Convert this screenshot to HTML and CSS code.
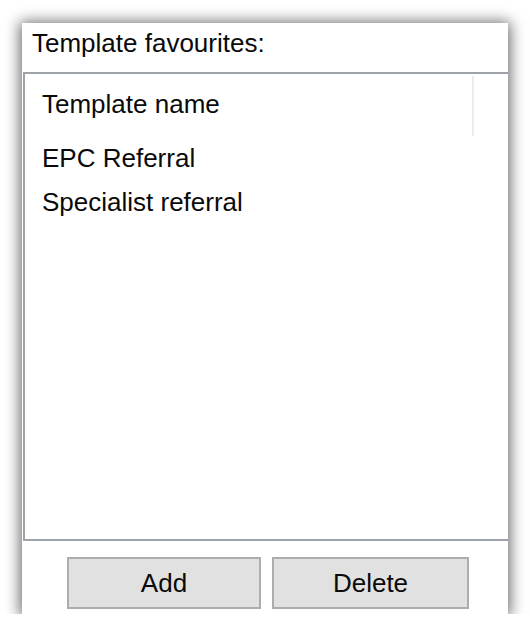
FILE: index.html
```html
<!DOCTYPE html>
<html lang="en">
<head>
<meta charset="utf-8">
<title>Template favourites</title>
<link rel="stylesheet" href="styles.css">
</head>
<body>
<div class="window">
  <div class="title">Template favourites:</div>
  <div class="list">
    <div class="list-head">
      <div class="col-name">Template name</div>
      <div class="col-rest"></div>
    </div>
    <div class="row">EPC Referral</div>
    <div class="row">Specialist referral</div>
  </div>
  <div class="actions">
    <button class="btn btn-add" type="button">Add</button>
    <button class="btn btn-delete" type="button">Delete</button>
  </div>
</div>
</body>
</html>
```
FILE: styles.css
```css
* {
  box-sizing: border-box;
}

html, body {
  margin: 0;
  padding: 0;
  background: #ffffff;
}

body {
  font-family: "Liberation Sans", Arial, sans-serif;
  font-size: 26px;
  color: #0a0a0a;
}

.window {
  margin: 23px 0 0 22px;
  width: 486px;
  height: 591px;
  background: #ffffff;
  box-shadow: 0 1px 14px 2px rgba(0, 0, 0, 0.6);
  display: flex;
  flex-direction: column;
}

.title {
  height: 49px;
  padding: 5px 0 0 10px;
  line-height: 30px;
  white-space: nowrap;
}

.list {
  margin-left: 1px;
  height: 469px;
  border-top: 2px solid #9ea3aa;
  border-left: 2px solid #9ea3aa;
  border-bottom: 2px solid #9ea3aa;
  background: #ffffff;
}

.list-head {
  display: flex;
  height: 62px;
}

.col-name {
  width: 449px;
  height: 60px;
  margin-top: 2px;
  padding: 13px 0 0 17px;
  line-height: 30px;
  border-right: 2px solid #ebebeb;
  white-space: nowrap;
}

.col-rest {
  flex: 1;
}

.row {
  height: 44px;
  line-height: 44px;
  padding-left: 17px;
  white-space: nowrap;
}

.actions {
  flex: 1;
  display: flex;
  gap: 11px;
  padding: 16px 0 0 45px;
}

.btn {
  height: 52px;
  margin: 0;
  padding: 0;
  background: #e1e1e1;
  border: 2px solid #adadad;
  border-radius: 0;
  font-family: "Liberation Sans", Arial, sans-serif;
  font-size: 26px;
  color: #0a0a0a;
  line-height: 30px;
}

.btn-add {
  width: 194px;
}

.btn-delete {
  width: 197px;
}
```
